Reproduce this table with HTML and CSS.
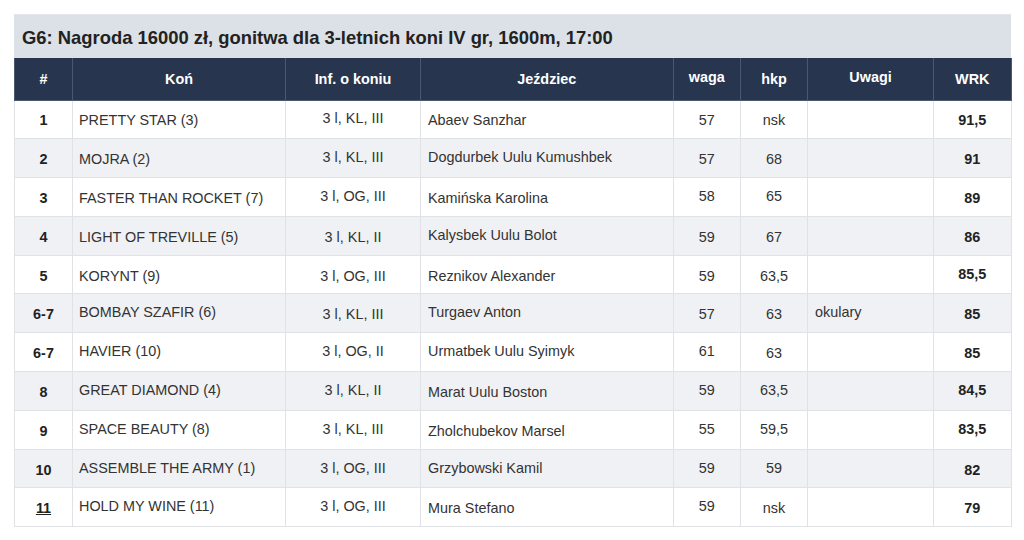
FILE: index.html
```html
<!DOCTYPE html>
<html lang="pl">
<head>
<meta charset="utf-8">
<title>G6</title>
<link rel="stylesheet" href="styles.css">
</head>
<body>
<div class="race">
  <h2 class="race-title">G6: Nagroda 16000 zł, gonitwa dla 3-letnich koni IV gr, 1600m, 17:00</h2>
  <table class="runners">
    <colgroup>
      <col class="c-no"><col class="c-horse"><col class="c-info"><col class="c-jockey"><col class="c-weight"><col class="c-hkp"><col class="c-notes"><col class="c-wrk">
    </colgroup>
    <thead>
      <tr>
        <th>#</th><th>Koń</th><th>Inf. o koniu</th><th>Jeździec</th><th class="up">waga</th><th>hkp</th><th class="up">Uwagi</th><th>WRK</th>
      </tr>
    </thead>
    <tbody>
      <tr><td class="no">1</td><td class="horse">PRETTY STAR (3)</td><td class="ctr up">3 l, KL, III</td><td class="jockey">Abaev Sanzhar</td><td class="ctr">57</td><td class="ctr">nsk</td><td class="notes"></td><td class="wrk">91,5</td></tr>
      <tr><td class="no">2</td><td class="horse">MOJRA (2)</td><td class="ctr up">3 l, KL, III</td><td class="jockey up">Dogdurbek Uulu Kumushbek</td><td class="ctr">57</td><td class="ctr">68</td><td class="notes"></td><td class="wrk">91</td></tr>
      <tr><td class="no">3</td><td class="horse">FASTER THAN ROCKET (7)</td><td class="ctr up">3 l, OG, III</td><td class="jockey">Kamińska Karolina</td><td class="ctr up">58</td><td class="ctr up">65</td><td class="notes"></td><td class="wrk">89</td></tr>
      <tr><td class="no">4</td><td class="horse">LIGHT OF TREVILLE (5)</td><td class="ctr">3 l, KL, II</td><td class="jockey up">Kalysbek Uulu Bolot</td><td class="ctr">59</td><td class="ctr">67</td><td class="notes"></td><td class="wrk">86</td></tr>
      <tr><td class="no">5</td><td class="horse">KORYNT (9)</td><td class="ctr">3 l, OG, III</td><td class="jockey">Reznikov Alexander</td><td class="ctr">59</td><td class="ctr">63,5</td><td class="notes"></td><td class="wrk up">85,5</td></tr>
      <tr><td class="no">6-7</td><td class="horse up">BOMBAY SZAFIR (6)</td><td class="ctr">3 l, KL, III</td><td class="jockey up">Turgaev Anton</td><td class="ctr">57</td><td class="ctr">63</td><td class="notes up">okulary</td><td class="wrk">85</td></tr>
      <tr><td class="no">6-7</td><td class="horse up">HAVIER (10)</td><td class="ctr up">3 l, OG, II</td><td class="jockey up">Urmatbek Uulu Syimyk</td><td class="ctr up">61</td><td class="ctr">63</td><td class="notes"></td><td class="wrk">85</td></tr>
      <tr><td class="no">8</td><td class="horse up">GREAT DIAMOND (4)</td><td class="ctr up">3 l, KL, II</td><td class="jockey">Marat Uulu Boston</td><td class="ctr up">59</td><td class="ctr up">63,5</td><td class="notes"></td><td class="wrk up">84,5</td></tr>
      <tr><td class="no">9</td><td class="horse up">SPACE BEAUTY (8)</td><td class="ctr up">3 l, KL, III</td><td class="jockey">Zholchubekov Marsel</td><td class="ctr up">55</td><td class="ctr up">59,5</td><td class="notes"></td><td class="wrk up">83,5</td></tr>
      <tr><td class="no">10</td><td class="horse up">ASSEMBLE THE ARMY (1)</td><td class="ctr up">3 l, OG, III</td><td class="jockey up">Grzybowski Kamil</td><td class="ctr up">59</td><td class="ctr up">59</td><td class="notes"></td><td class="wrk">82</td></tr>
      <tr><td class="no"><a class="link" href="#">11</a></td><td class="horse up">HOLD MY WINE (11)</td><td class="ctr up">3 l, OG, III</td><td class="jockey">Mura Stefano</td><td class="ctr up">59</td><td class="ctr">nsk</td><td class="notes"></td><td class="wrk">79</td></tr>
    </tbody>
  </table>
</div>
</body>
</html>
```

FILE: styles.css
```css
* { box-sizing: border-box; }

html, body {
  background: #ffffff;
}

body {
  margin: 14px 0 0 14px;
  font-family: "Liberation Sans", Arial, sans-serif;
  color: #333333;
}

.race {
  width: 996.5px;
}

.race-title {
  margin: 0;
  height: 44px;
  padding: 3px 8px 0;
  display: flex;
  align-items: center;
  background: #dce0e7;
  color: #222222;
  font-size: 18.4px;
  font-weight: bold;
  border-top: 1px solid #e3e6eb;
}

.runners {
  width: 100%;
  border-collapse: collapse;
  table-layout: fixed;
  font-size: 14.4px;
}

.c-no { width: 58px; }
.c-horse { width: 213px; }
.c-info { width: 135px; }
.c-jockey { width: 252.5px; }
.c-weight { width: 67.5px; }
.c-hkp { width: 67px; }
.c-notes { width: 126px; }
.c-wrk { width: 77.5px; }

.runners thead tr {
  height: 42px;
  background: #27354f;
}

.runners th {
  color: #ffffff;
  font-weight: bold;
  font-size: 14.4px;
  text-align: center;
  padding: 0 6px;
  border: 1px solid #4a5872;
  border-top: none;
  vertical-align: middle;
}

.runners th.up {
  padding-bottom: 4px;
}

.runners tbody tr {
  height: 38.8px;
  background: #ffffff;
}

.runners tbody tr:nth-child(even) {
  background: #f0f1f4;
}

.runners td {
  border: 1px solid #e1e2e6;
  padding: 2px 7px 0;
  vertical-align: middle;
  white-space: nowrap;
  overflow: hidden;
}

.runners td.up {
  padding-top: 0;
  padding-bottom: 2px;
}

.runners td.horse {
  padding-left: 6px;
}

.no {
  text-align: center;
  font-weight: bold;
  color: #222222;
}

.link {
  color: #222222;
  text-decoration: underline;
}

.ctr {
  text-align: center;
}

.horse, .jockey, .notes {
  text-align: left;
}

.wrk {
  text-align: center;
  font-weight: bold;
  color: #222222;
}
```
